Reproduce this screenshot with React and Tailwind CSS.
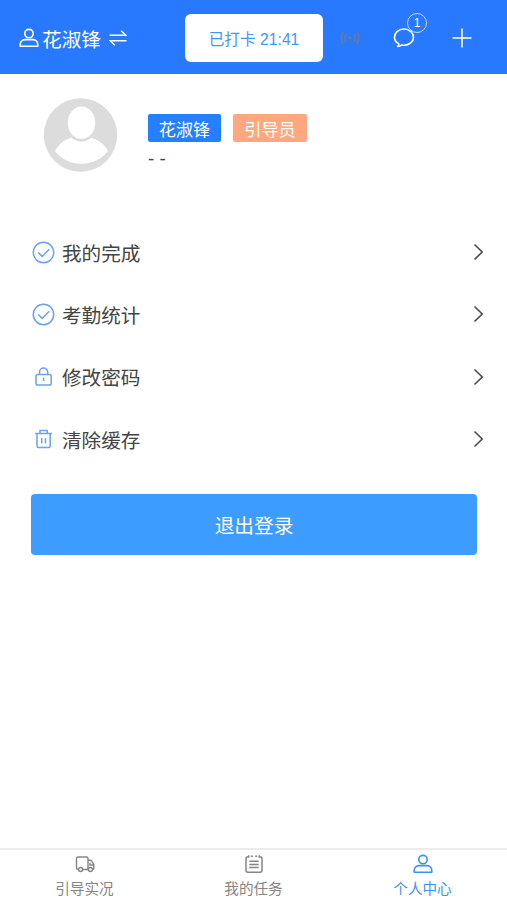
import React from "react";

const menuItems = [
  { label: "我的完成", Icon: CheckIcon },
  { label: "考勤统计", Icon: CheckIcon },
  { label: "修改密码", Icon: LockIcon },
  { label: "清除缓存", Icon: TrashIcon },
];

const tabs = [
  { label: "引导实况", Icon: TruckIcon },
  { label: "我的任务", Icon: TaskIcon },
  { label: "个人中心", Icon: UserIcon, active: true },
];

function UserIcon() {
  return (
    <svg className="w-5 h-5" viewBox="0 0 20 20" fill="none" stroke="currentColor" strokeWidth="1.6">
      <circle cx="10" cy="5.6" r="4.2" />
      <path d="M1.2 18.2v-1.8c0-3.2 2.6-4.8 5.3-4.8h7c2.7 0 5.3 1.6 5.3 4.8v1.8z" strokeLinejoin="round" />
    </svg>
  );
}

function SwapIcon() {
  return (
    <svg className="w-[18px] h-[18px]" viewBox="0 0 18 18" fill="none" stroke="currentColor" strokeWidth="1.5">
      <path d="M0.5 6.3h16.3l-4.6-4.6M17.5 11.7H1.2l4.6 4.6" />
    </svg>
  );
}

function SignalIcon() {
  return (
    <svg className="w-5 h-4" viewBox="0 0 20 16" fill="none" stroke="currentColor" strokeWidth="1.8">
      <path d="M2.7 2q-2.4 6 0 12M5.9 3.8q-1.8 4.2 0 8.4M17.3 2q2.4 6 0 12M14.1 3.8q1.8 4.2 0 8.4" />
      <circle cx="10" cy="8" r="1.7" fill="currentColor" stroke="none" />
    </svg>
  );
}

function ChatIcon() {
  return (
    <svg className="w-[22px] h-[22px]" viewBox="0 0 22 22" fill="none" stroke="currentColor" strokeWidth="1.6">
      <path
        d="M5.7 16.8C3.2 15.4 1.5 13 1.5 10.2 1.5 5.6 5.8 2 11 2s9.5 3.6 9.5 8.2-4.3 8.1-9.5 8.1c-.9 0-1.7-.1-2.5-.3-.9.9-2 1.4-3.9 1.5.9-.8 1.4-1.700 1.100-2.700z"
        strokeLinejoin="round"
      />
    </svg>
  );
}

function PlusIcon() {
  return (
    <svg className="w-5 h-5" viewBox="0 0 20 20" stroke="currentColor" strokeWidth="1.6">
      <path d="M10 0.5v19M0.5 10h19" />
    </svg>
  );
}

function CheckIcon() {
  return (
    <svg className="w-[23px] h-[23px]" viewBox="0 0 23 23" fill="none" stroke="currentColor" strokeWidth="1.5">
      <circle cx="11.5" cy="11.5" r="10.2" />
      <path d="M6.2 11.5l4 3.9 7-7.2" />
    </svg>
  );
}

function LockIcon() {
  return (
    <svg className="w-[23px] h-[23px]" viewBox="0 0 23 23" fill="none" stroke="currentColor" strokeWidth="1.5">
      <rect x="4" y="9.5" width="15.2" height="10.5" rx="1.8" />
      <path d="M7.5 9.5V7.2a4.1 4.1 0 0 1 8.2 0v2.3M11.6 12.800v3.200" />
    </svg>
  );
}

function TrashIcon() {
  return (
    <svg className="w-[23px] h-[23px]" viewBox="0 0 23 23" fill="none" stroke="currentColor" strokeWidth="1.5">
      <path d="M3.2 5.5h16.8M8 5.5V2.5h7.2v3M5 5.5v12.500q0 1.500 1.500 1.500h10.200q1.500 0 1.500-1.500V5.5M9.700 10v5.500M13.500 10v5.500" />
    </svg>
  );
}

function TruckIcon() {
  return (
    <svg className="w-5 h-5" viewBox="0 0 20 20" fill="none" stroke="currentColor" strokeWidth="1.4">
      <path d="M3.5 15.500H3q-1.500 0-1.500-1.500V4.500Q1.500 3 3 3h8.500Q13 3 13 4.500v11H7.700M13 6.200h2.200q.8 0 1.300.7l2 2.900q.3.500.3 1v3.200q0 1.500-1.300 1.500M15 9v2h3.700" />
      <circle cx="5.6" cy="15.5" r="2" />
      <circle cx="15.4" cy="15.5" r="2" />
    </svg>
  );
}

function TaskIcon() {
  return (
    <svg className="w-5 h-5" viewBox="0 0 20 20" fill="none" stroke="currentColor" strokeWidth="1.5">
      <path d="M4 2.8Q2 2.8 2 4.8v11.500q0 2 2 2h12q2 0 2-2V4.800q0-2-2-2M6.800 2.300h2M11.200 2.300h2M4.700 1.200v2.600M15.300 1.200v2.600M5.300 7.200h9.400M5.300 10.400h9.400M5.300 13.600h9.400" />
    </svg>
  );
}

function Header() {
  return (
    <header className="flex h-[74px] shrink-0 items-center bg-[#2979ff] pt-0.5 text-white">
      <div className="flex w-[185px] items-center pl-[19px]">
        <UserIcon />
        <span className="ml-[3px] pt-[3px] text-[19.7px] leading-6">花淑锋</span>
        <span className="ml-2">
          <SwapIcon />
        </span>
      </div>
      <button className="h-[48px] w-[138px] rounded-md bg-white pt-[3px] text-[15.7px] text-[#4298f5]">
        已打卡 21:41
      </button>
      <span className="ml-[17px] text-[#6679a0]">
        <SignalIcon />
      </span>
      <div className="relative ml-[33px]">
        <ChatIcon />
        <span className="absolute -top-[14px] left-[14px] flex h-5 w-5 items-center justify-center rounded-full border border-[#c5daff] bg-[#2979ff] text-[12px] leading-none">
          1
        </span>
      </div>
      <span className="ml-[37px]">
        <PlusIcon />
      </span>
    </header>
  );
}

function Profile() {
  return (
    <section className="flex h-[147px] shrink-0 pl-[43px] pt-6">
      <svg className="h-[75px] w-[75px]" viewBox="0 0 75 75">
        <circle cx="37.5" cy="37" r="36.7" fill="#dcdcdc" />
        <path d="M12 53C16 45.5 22.5 41 29 39.5q9.5 7 18.5 0C54 41 61 45.5 65 53 58.5 61.5 49 65.7 38.5 65.7S18.5 61.5 12 53z" fill="white" />
        <ellipse cx="38.5" cy="25" rx="15.5" ry="18.7" fill="#dcdcdc" />
        <ellipse cx="38.5" cy="24.8" rx="13.7" ry="16.3" fill="white" />
      </svg>
      <div className="ml-[30px] pt-4">
        <div className="flex gap-3 text-[17.2px] leading-[32px] text-white">
          <span className="h-7 w-[73px] rounded-[2px] bg-[#2580ff] text-center">花淑锋</span>
          <span className="h-7 w-[74px] rounded-[2px] bg-[#ffa77f] text-center">引导员</span>
        </div>
        <p className="mt-[3px] text-[19px] leading-7 text-[#444]">- -</p>
      </div>
    </section>
  );
}

function App() {
  return (
    <div className="flex h-[900px] w-[507px] flex-col bg-white font-['Liberation_Sans','Noto_Sans_CJK_SC',sans-serif]">
      <Header />
      <Profile />

      {/* Menu */}
      <ul className="pl-8 pr-[23px]">
        {menuItems.map(({ label, Icon }) => (
          <li key={label} className="flex h-[62.3px] items-center">
            <span className="text-[#6ba2eb]">
              <Icon />
            </span>
            <span className="ml-[7px] flex-1 pt-[3px] text-[19.6px] leading-7 text-[#444]">{label}</span>
            <svg className="h-[18px] w-[11px]" viewBox="0 0 11 18" fill="none" stroke="#4a4a4a" strokeWidth="1.6">
              <path d="M1.5 1.5L9.2 9l-7.7 7.5" />
            </svg>
          </li>
        ))}
      </ul>

      <button className="ml-[31px] mt-6 h-[61px] w-[446px] shrink-0 rounded-[4px] bg-[#3c9cff] pt-1 text-[19.7px] text-white">
        退出登录
      </button>

      {/* Bottom tabs */}
      <nav className="mt-auto grid h-[52px] grid-cols-3 border-t-2 border-[#ececec]">
        {tabs.map(({ label, Icon, active }) => (
          <div
            key={label}
            className={`flex flex-col items-center pt-1 ${active ? "text-[#3c93ee]" : "text-[#858585]"}`}
          >
            <Icon />
            <span className="mt-[5px] text-[14.6px] leading-5">{label}</span>
          </div>
        ))}
      </nav>
    </div>
  );
}

export default App;
